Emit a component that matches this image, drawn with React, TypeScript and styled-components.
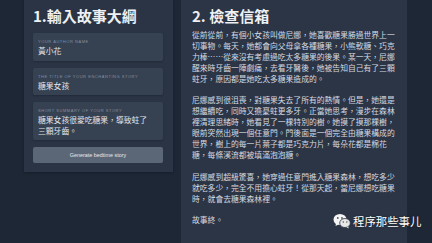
import React from "react";
import styled, { createGlobalStyle } from "styled-components";

const Global = createGlobalStyle`
  html, body { margin: 0; padding: 0; background: #1e2736; overflow: hidden; }
  body { font-family: "Noto Sans CJK TC", "Noto Sans", sans-serif; }
`;

const Page = styled.div`
  position: relative;
  width: 432px;
  height: 243px;
  display: flex;
  align-items: flex-start;
  gap: 8px;
  padding-left: 24px;
  box-sizing: border-box;
  background: #1e2736;
  overflow: hidden;
`;

const LeftPanel = styled.section`
  width: 149px;
  box-sizing: border-box;
  padding: 6px 10px 9px 9px;
  background: #2a3444;
  display: flex;
  flex-direction: column;
  gap: 7px;
  box-shadow: 0 1px 3px rgba(0,0,0,0.25);
`;

const RightPanel = styled.section`
  width: 226px;
  height: 243px;
  box-sizing: border-box;
  padding: 6px 11px 0 11px;
  background: #2b3545;
  color: #d9dde3;
`;

const Title = styled.h1<{ $mb?: number }>`
  margin: 0 0 ${(p) => p.$mb ?? 0}px 0;
  font-family: "Noto Sans CJK TC", "Noto Sans", sans-serif;
  font-size: 15px;
  line-height: 20px;
  font-weight: 700;
  color: #eef0f3;
  white-space: nowrap;
`;

const Field = styled.div`
  background: #364152;
  border-radius: 2px;
  padding: 6px 10px 4px 5px;
  display: flex;
  flex-direction: column;
  gap: 2px;
  box-shadow: 0 1px 2px rgba(0,0,0,0.2);
`;

const Label = styled.div`
  font-family: "Liberation Sans", Arial, sans-serif;
  font-size: 4px;
  line-height: 5px;
  letter-spacing: 0.55px;
  text-transform: uppercase;
  color: #8590a0;
  white-space: nowrap;
`;

const Value = styled.div`
  font-size: 7.8px;
  line-height: 10.5px;
  color: #e3e6ea;
`;

const Button = styled.button`
  height: 16px;
  border: none;
  border-radius: 2px;
  background: #5b6677;
  color: #e6e9ed;
  font-family: "Liberation Sans", Arial, sans-serif;
  font-size: 5.4px;
  padding: 0;
  cursor: pointer;
`;

const Story = styled.div`
  width: 204px;
  font-size: 7.8px;
  line-height: 10.9px;
  color: #d6dae0;
`;

const Para = styled.p`
  margin: 0 0 10.9px 0;
`;

const Watermark = styled.div`
  position: absolute;
  left: 333px;
  top: 212px;
  display: flex;
  align-items: center;
  gap: 2px;
  color: #ffffff;
  font-size: 11.4px;
  line-height: 18px;
  text-shadow: 0 0 2px rgba(0,0,0,0.5);
  white-space: nowrap;
`;

const WeChatIcon = () => (
  <svg width="18" height="16" viewBox="0 0 18 16">
    <ellipse cx="7" cy="6.5" rx="6.5" ry="5.5" fill="#f4f4f4" />
    <path d="M3 10.5 L2.5 13 L5.5 11.5 Z" fill="#f4f4f4" />
    <circle cx="4.8" cy="5" r="0.9" fill="#555" />
    <circle cx="9" cy="5" r="0.9" fill="#555" />
    <ellipse cx="12" cy="10" rx="5.3" ry="4.5" fill="#e8e8e8" stroke="#2b3545" strokeWidth="0.8" />
    <path d="M15 13.5 L16 15.5 L13.5 14.2 Z" fill="#e8e8e8" />
    <circle cx="10.3" cy="9" r="0.75" fill="#555" />
    <circle cx="13.8" cy="9" r="0.75" fill="#555" />
  </svg>
);

export default function App() {
  return (
    <>
      <Global />
      <Page>
        <LeftPanel>
          <Title>1.輸入故事大綱</Title>
          <Field>
            <Label>Your author name</Label>
            <Value>黃小花</Value>
          </Field>
          <Field>
            <Label>The title of your enchanting story</Label>
            <Value>糖果女孩</Value>
          </Field>
          <Field>
            <Label>Short summary of your story</Label>
            <Value>糖果女孩很愛吃糖果，導致蛀了三顆牙齒。</Value>
          </Field>
          <Button>Generate bedtime story</Button>
        </LeftPanel>
        <RightPanel>
          <Title $mb={4}>2. 檢查信箱</Title>
          <Story>
            <Para>
              從前從前，有個小女孩叫做尼娜，她喜歡糖果勝過世界上一切事物。每天，她都會向父母拿各種糖果，小熊軟糖、巧克力棒⋯⋯從來沒有考慮過吃太多糖果的後果。某一天，尼娜醒來時牙齒一陣劇痛，去看牙醫後，她被告知自己有了三顆蛀牙，原因都是她吃太多糖果造成的。
            </Para>
            <Para>
              尼娜感到很沮喪，對糖果失去了所有的熱情。但是，她還是想繼續吃，同時又擔憂蛀更多牙。正當她思考，漫步在森林裡清理思緒時，她看見了一棵特別的樹。她摸了摸那棵樹，眼前突然出現一個任意門。門後面是一個完全由糖果構成的世界，樹上的每一片葉子都是巧克力片，每朵花都是棉花糖，每條溪流都被填滿泡泡糖。
            </Para>
            <Para>
              尼娜感到超級驚喜，她穿過任意門進入糖果森林，想吃多少就吃多少，完全不用擔心蛀牙！從那天起，當尼娜想吃糖果時，就會去糖果森林裡。
            </Para>
            <Para>故事終。</Para>
          </Story>
        </RightPanel>
        <Watermark>
          <WeChatIcon />
          <span>程序那些事儿</span>
        </Watermark>
      </Page>
    </>
  );
}
